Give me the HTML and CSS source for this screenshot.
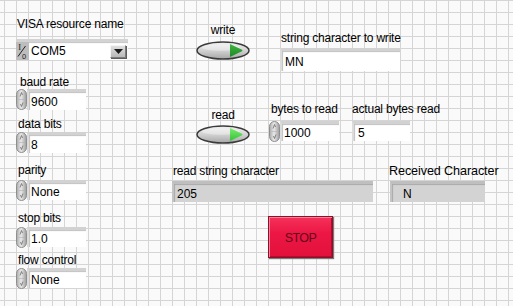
FILE: index.html
```html
<!DOCTYPE html>
<html>
<head>
<meta charset="utf-8">
<link rel="stylesheet" href="styles.css">
</head>
<body>
<svg class="defs" width="0" height="0" aria-hidden="true">
  <defs>
    <linearGradient id="spin" x1="0" x2="1" y1="0" y2="0">
      <stop offset="0" stop-color="#a9a9a9"/>
      <stop offset="0.45" stop-color="#e9e9e9"/>
      <stop offset="1" stop-color="#9c9c9c"/>
    </linearGradient>
    <linearGradient id="btn" x1="0" x2="0" y1="0" y2="1">
      <stop offset="0" stop-color="#f2f2f2"/>
      <stop offset="0.5" stop-color="#d2d2d2"/>
      <stop offset="1" stop-color="#a6a6a6"/>
    </linearGradient>
    <linearGradient id="gdark" x1="0" x2="0" y1="0" y2="1">
      <stop offset="0" stop-color="#3fb544"/>
      <stop offset="1" stop-color="#1d8a25"/>
    </linearGradient>
    <linearGradient id="glight" x1="0" x2="0" y1="0" y2="1">
      <stop offset="0" stop-color="#7cec6c"/>
      <stop offset="1" stop-color="#34c23a"/>
    </linearGradient>
  </defs>
</svg>

<div class="panel">

  <!-- VISA resource name -->
  <div class="ctl c-visa">
    <div class="lbl ml1">VISA resource name</div>
    <div class="visa">
      <svg class="io" width="13" height="18" viewBox="0 0 13 18">
        <rect width="13" height="18" fill="#bdbdbd"/>
        <text x="2.2" y="8" font-family="Liberation Serif, serif" font-size="8.5" fill="#222">I</text>
        <line x1="2" y1="14.5" x2="9.5" y2="4" stroke="#222" stroke-width="1"/>
        <text x="6" y="16.5" font-family="Liberation Sans, sans-serif" font-size="7.5" fill="#222">0</text>
      </svg>
      <span class="visa-text">COM5</span>
      <span class="drop">
        <svg width="9" height="5" viewBox="0 0 9 5"><path d="M0 0 H9 L4.5 5 Z" fill="#1c1c1c"/></svg>
      </span>
    </div>
  </div>

  <!-- baud rate -->
  <div class="ctl c-baud">
    <div class="lbl ml4">baud rate</div>
    <div class="num h21">
      <svg class="spin" width="11" height="21" viewBox="0 0 11 21"><rect x="0.5" y="0.5" width="10" height="20" rx="5" fill="url(#spin)" stroke="#8e8e8e"/><path d="M5.5 3.5 L4 7.5 M5.5 3.5 L6.5 6" stroke="#6c6c6c" stroke-width="0.8" fill="none"/><path d="M5.5 17.5 L4.5 15 M5.5 17.5 L7 13.5" stroke="#6c6c6c" stroke-width="0.8" fill="none"/><line x1="2.5" y1="10.5" x2="8.5" y2="10.5" stroke="#b0b0b0" stroke-width="0.6"/></svg>
      <div class="field w59">9600</div>
    </div>
  </div>

  <!-- data bits -->
  <div class="ctl c-data">
    <div class="lbl ml2">data bits</div>
    <div class="num h21 mt1">
      <svg class="spin" width="11" height="21" viewBox="0 0 11 21"><rect x="0.5" y="0.5" width="10" height="20" rx="5" fill="url(#spin)" stroke="#8e8e8e"/><path d="M5.5 3.5 L4 7.5 M5.5 3.5 L6.5 6" stroke="#6c6c6c" stroke-width="0.8" fill="none"/><path d="M5.5 17.5 L4.5 15 M5.5 17.5 L7 13.5" stroke="#6c6c6c" stroke-width="0.8" fill="none"/><line x1="2.5" y1="10.5" x2="8.5" y2="10.5" stroke="#b0b0b0" stroke-width="0.6"/></svg>
      <div class="field w59">8</div>
    </div>
  </div>

  <!-- parity -->
  <div class="ctl c-parity">
    <div class="lbl ml2">parity</div>
    <div class="num h20 mt3">
      <svg class="spin" width="11" height="21" viewBox="0 0 11 21"><rect x="0.5" y="0.5" width="10" height="20" rx="5" fill="url(#spin)" stroke="#8e8e8e"/><path d="M5.5 3.5 L4 7.5 M5.5 3.5 L6.5 6" stroke="#6c6c6c" stroke-width="0.8" fill="none"/><path d="M5.5 17.5 L4.5 15 M5.5 17.5 L7 13.5" stroke="#6c6c6c" stroke-width="0.8" fill="none"/><line x1="2.5" y1="10.5" x2="8.5" y2="10.5" stroke="#b0b0b0" stroke-width="0.6"/></svg>
      <div class="field w59">None</div>
    </div>
  </div>

  <!-- stop bits -->
  <div class="ctl c-stopbits">
    <div class="lbl ml2">stop bits</div>
    <div class="num h20 mt2">
      <svg class="spin" width="11" height="21" viewBox="0 0 11 21"><rect x="0.5" y="0.5" width="10" height="20" rx="5" fill="url(#spin)" stroke="#8e8e8e"/><path d="M5.5 3.5 L4 7.5 M5.5 3.5 L6.5 6" stroke="#6c6c6c" stroke-width="0.8" fill="none"/><path d="M5.5 17.5 L4.5 15 M5.5 17.5 L7 13.5" stroke="#6c6c6c" stroke-width="0.8" fill="none"/><line x1="2.5" y1="10.5" x2="8.5" y2="10.5" stroke="#b0b0b0" stroke-width="0.6"/></svg>
      <div class="field w59">1.0</div>
    </div>
  </div>

  <!-- flow control -->
  <div class="ctl c-flow">
    <div class="lbl ml2">flow control</div>
    <div class="num h20 mt1">
      <svg class="spin" width="11" height="21" viewBox="0 0 11 21"><rect x="0.5" y="0.5" width="10" height="20" rx="5" fill="url(#spin)" stroke="#8e8e8e"/><path d="M5.5 3.5 L4 7.5 M5.5 3.5 L6.5 6" stroke="#6c6c6c" stroke-width="0.8" fill="none"/><path d="M5.5 17.5 L4.5 15 M5.5 17.5 L7 13.5" stroke="#6c6c6c" stroke-width="0.8" fill="none"/><line x1="2.5" y1="10.5" x2="8.5" y2="10.5" stroke="#b0b0b0" stroke-width="0.6"/></svg>
      <div class="field w59">None</div>
    </div>
  </div>

  <!-- write button -->
  <div class="ctl c-write">
    <div class="lbl center">write</div>
    <svg class="btn mt4" width="54" height="19" viewBox="0 0 54 19">
      <ellipse cx="27" cy="9.5" rx="26" ry="8.6" fill="url(#btn)" stroke="#3a3a3a" stroke-width="1.5"/>
      <ellipse cx="25" cy="6.5" rx="19" ry="3.2" fill="#ffffff" opacity="0.35"/>
      <path d="M34 3.5 Q33.5 3 34.5 3.3 L46 8.8 Q47 9.5 46 10.2 L34.5 15.7 Q33.5 16 34 15.5 Z" fill="url(#gdark)"/>
    </svg>
  </div>

  <!-- string character to write -->
  <div class="ctl c-str">
    <div class="lbl ml1">string character to write</div>
    <div class="field w120 h23 mt3 pl3">MN</div>
  </div>

  <!-- read button -->
  <div class="ctl c-read">
    <div class="lbl center">read</div>
    <svg class="btn mt3" width="54" height="19" viewBox="0 0 54 19">
      <ellipse cx="27" cy="9.5" rx="26" ry="8.6" fill="url(#btn)" stroke="#3a3a3a" stroke-width="1.5"/>
      <ellipse cx="25" cy="6.5" rx="19" ry="3.2" fill="#ffffff" opacity="0.35"/>
      <path d="M34 3.5 Q33.5 3 34.5 3.3 L46 8.8 Q47 9.5 46 10.2 L34.5 15.7 Q33.5 16 34 15.5 Z" fill="url(#glight)"/>
    </svg>
  </div>

  <!-- bytes to read -->
  <div class="ctl c-bytes">
    <div class="lbl ml2">bytes to read</div>
    <div class="num h20 mt5">
      <svg class="spin" width="11" height="21" viewBox="0 0 11 21"><rect x="0.5" y="0.5" width="10" height="20" rx="5" fill="url(#spin)" stroke="#8e8e8e"/><path d="M5.5 3.5 L4 7.5 M5.5 3.5 L6.5 6" stroke="#6c6c6c" stroke-width="0.8" fill="none"/><path d="M5.5 17.5 L4.5 15 M5.5 17.5 L7 13.5" stroke="#6c6c6c" stroke-width="0.8" fill="none"/><line x1="2.5" y1="10.5" x2="8.5" y2="10.5" stroke="#b0b0b0" stroke-width="0.6"/></svg>
      <div class="field w59">1000</div>
    </div>
  </div>

  <!-- actual bytes read -->
  <div class="ctl c-actual">
    <div class="lbl">actual bytes read</div>
    <div class="field w58 h20 mt5 pl4">5</div>
  </div>

  <!-- read string character -->
  <div class="ctl c-rstr">
    <div class="lbl ml1">read string character</div>
    <div class="ind w201 mt3">205</div>
  </div>

  <!-- Received Character -->
  <div class="ctl c-recv">
    <div class="lbl big">Received Character</div>
    <div class="ind w95 mt2 ml1 pl11">N</div>
  </div>

  <!-- STOP -->
  <div class="stop">STOP</div>

</div>
</body>
</html>
```

FILE: styles.css
```css
html, body {
  margin: 0;
  padding: 0;
}

.defs {
  position: absolute;
  width: 0;
  height: 0;
  overflow: hidden;
}

.panel {
  position: relative;
  width: 513px;
  height: 306px;
  overflow: hidden;
  background-color: #fafafa;
  background-image:
    linear-gradient(to right, #d5d5d5 1px, transparent 1px),
    linear-gradient(to bottom, #d5d5d5 1px, transparent 1px);
  background-size: 12px 12px;
  background-position: 4px 0;
  font-family: "Liberation Sans", Arial, sans-serif;
  color: #000;
}

/* control groups placed on the front-panel canvas */
.ctl {
  position: absolute;
  display: flex;
  flex-direction: column;
  align-items: flex-start;
}

.c-visa { left: 16px; top: 17px; }
.c-baud { left: 16px; top: 75px; }
.c-data { left: 16px; top: 117px; }
.c-parity { left: 16px; top: 163px; }
.c-stopbits { left: 16px; top: 211px; }
.c-flow { left: 16px; top: 253px; }
.c-write { left: 196px; top: 23px; width: 54px; align-items: stretch; }
.c-read { left: 196px; top: 108px; width: 54px; align-items: stretch; }
.c-str { left: 280px; top: 31px; }
.c-bytes { left: 269px; top: 102px; }
.c-actual { left: 352px; top: 102px; }
.c-rstr { left: 172px; top: 164px; }
.c-recv { left: 389px; top: 164px; }

.lbl {
  font-size: 12px;
  line-height: 14px;
  letter-spacing: -0.2px;
  white-space: nowrap;
}
.lbl.center { text-align: center; }
.lbl.big {
  font-size: 12.6px;
  line-height: 15px;
  letter-spacing: -0.1px;
}

/* VISA ring */
.visa {
  margin-top: 8px;
  width: 112px;
  height: 21px;
  box-sizing: border-box;
  display: flex;
  align-items: center;
  background: #fff;
  border-top: 3px solid #d3d3d3;
  box-shadow: inset 0 1px 1px #c4c4c4;
  font-size: 12px;
}
.io {
  display: block;
  flex: none;
}
.visa-text {
  margin-left: 2px;
  flex: 1;
  line-height: 16px;
}
.drop {
  width: 16px;
  height: 13px;
  margin-right: 2px;
  box-sizing: border-box;
  display: flex;
  align-items: center;
  justify-content: center;
  background: linear-gradient(#e0e0e0, #b8b8b8);
  border: 1px solid #7c7c7c;
  border-top-color: #f4f4f4;
  border-left-color: #f4f4f4;
  box-shadow: 1px 1px 0 #5c5c5c;
}
.drop svg { display: block; }

/* numeric with spinner */
.num {
  display: flex;
  align-items: stretch;
}
.spin {
  display: block;
  flex: none;
  align-self: center;
}

.field, .ind {
  box-sizing: border-box;
  font-size: 12px;
  white-space: nowrap;
  display: flex;
  align-items: center;
}
.field {
  background: #fff;
  border-top: 3px solid #d2d2d2;
  border-left: 2px solid #dcdcdc;
  box-shadow: inset 1px 1px 1px #c0c0c0;
  padding-left: 2px;
  padding-top: 1px;
}
.num .field {
  height: 100%;
}

.ind {
  height: 21px;
  background: #d3d3d3;
  border-top: 3px solid #bfbfbf;
  border-left: 2px solid #c4c4c4;
  box-shadow: inset 1px 1px 1px #a9a9a9;
  padding-left: 3px;
  padding-top: 1px;
}

.btn {
  display: block;
}

/* STOP button */
.stop {
  position: absolute;
  left: 268px;
  top: 216px;
  width: 65px;
  height: 42px;
  box-sizing: border-box;
  display: flex;
  align-items: center;
  justify-content: center;
  background: linear-gradient(#f4325a, #ec1744 40%, #e3103c);
  border: 1px solid #8e0f28;
  box-shadow: inset 1px 1px 0 #ff7d96, inset -1px -1px 0 #b30c2e, 1px 1px 1px #7a7a7a;
  color: #66091b;
  font-size: 12.5px;
  letter-spacing: -0.6px;
  padding-top: 1px;
}

/* spacing / size utilities (kept last so they win) */
.ml1 { margin-left: 1px; }
.ml2 { margin-left: 2px; }
.ml4 { margin-left: 4px; }
.mt1 { margin-top: 1px; }
.mt2 { margin-top: 2px; }
.mt3 { margin-top: 3px; }
.mt4 { margin-top: 4px; }
.mt5 { margin-top: 5px; }
.pl3 { padding-left: 3px; }
.pl4 { padding-left: 4px; }
.pl11 { padding-left: 11px; }

.w58 { width: 58px; }
.w59 { width: 59px; }
.w95 { width: 95px; }
.w120 { width: 120px; }
.w201 { width: 201px; }
.h20 { height: 20px; }
.h21 { height: 21px; }
.h23 { height: 23px; }
```
